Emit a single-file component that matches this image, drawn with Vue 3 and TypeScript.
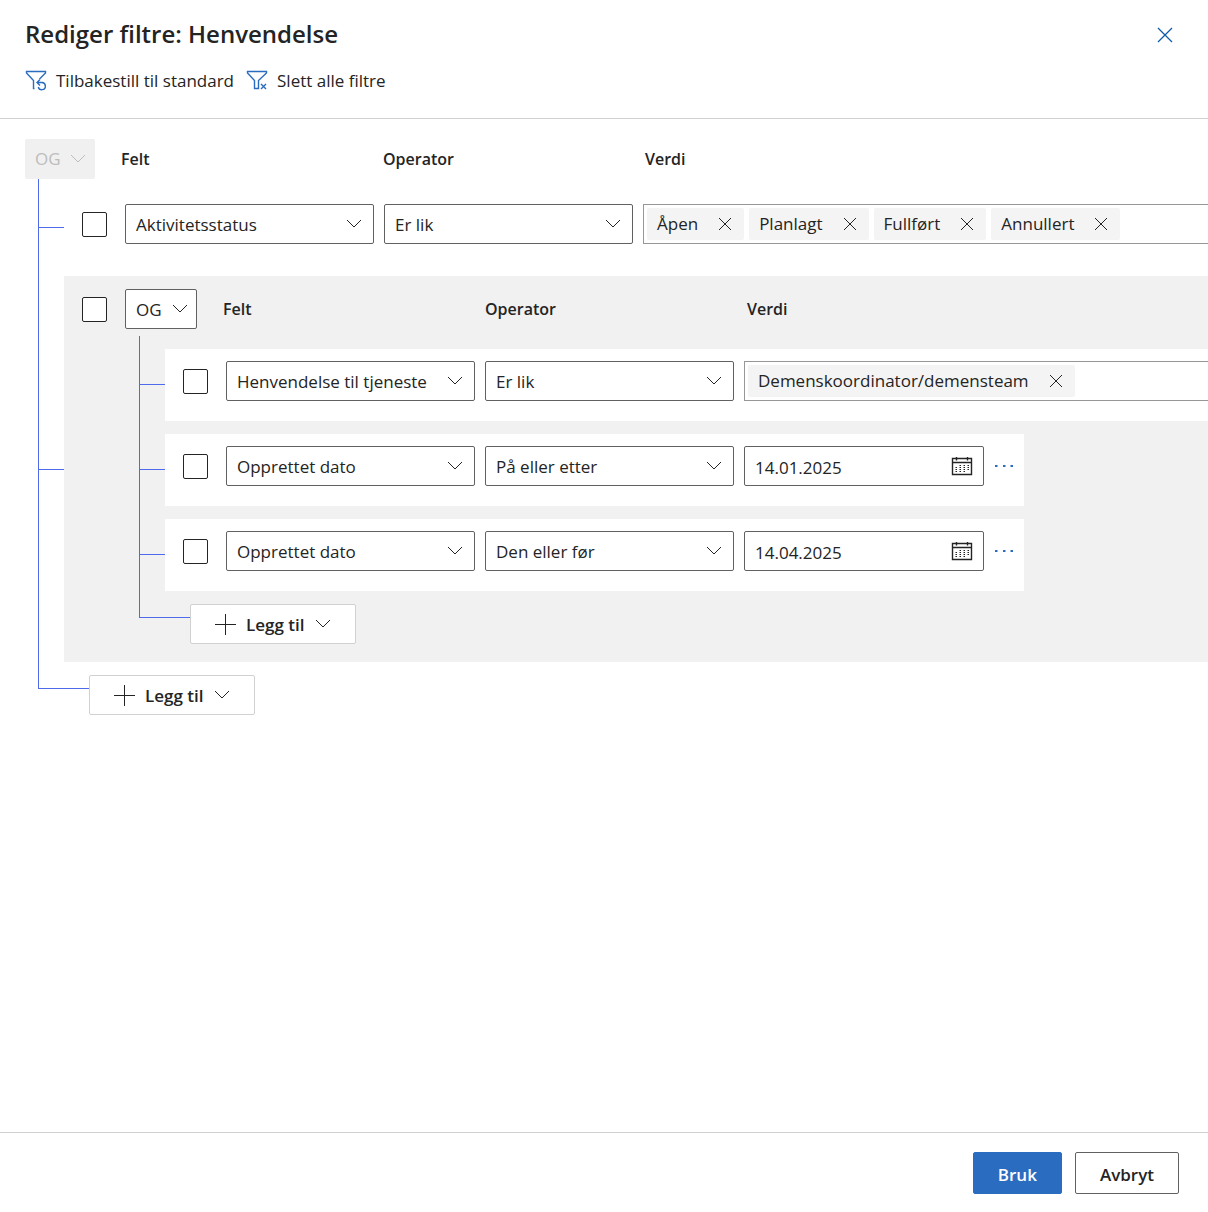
<script setup lang="ts">
import { ref } from 'vue'

interface Condition {
  id: string
  field: string
  operator: string
  tags?: string[]
  date?: string
}

const rootCondition = ref<Condition>({
  id: 'status',
  field: 'Aktivitetsstatus',
  operator: 'Er lik',
  tags: ['Åpen', 'Planlagt', 'Fullført', 'Annullert'],
})

const groupConditions = ref<Condition[]>([
  { id: 'service', field: 'Henvendelse til tjeneste', operator: 'Er lik', tags: ['Demenskoordinator/demensteam'] },
  { id: 'from', field: 'Opprettet dato', operator: 'På eller etter', date: '14.01.2025' },
  { id: 'to', field: 'Opprettet dato', operator: 'Den eller før', date: '14.04.2025' },
])

function removeTag(condition: Condition, tag: string) {
  condition.tags = condition.tags?.filter((t) => t !== tag)
}
</script>

<template>
  <div class="panel">
    <header class="header">
      <div class="title-row">
        <h1>Rediger filtre: Henvendelse</h1>
        <button class="close" type="button" aria-label="Lukk">
          <svg width="16" height="16" viewBox="0 0 16 16"><path d="M1 1l14 14M15 1L1 15" /></svg>
        </button>
      </div>
      <div class="toolbar">
        <button type="button">
          <svg width="22" height="22" viewBox="0 0 22 22">
            <path d="M9.500 18.500H8.500V10.500L1.500 3V1.500H20.500V3L14.500 9" />
            <path d="M12.500 12.500H17a3.600 3.600 0 1 1-3.700 4.500M15 9.500l-3 3 3 3" />
          </svg>
          Tilbakestill til standard
        </button>
        <button type="button">
          <svg width="22" height="22" viewBox="0 0 22 22">
            <path d="M20.500 1.500H1.500V3L8.500 10.500V18.500H12.500V10.500L20.500 3z" />
            <path d="M15 14l5 5M20 14l-5 5" />
          </svg>
          Slett alle filtre
        </button>
      </div>
    </header>

    <main class="body">
      <div class="group-head">
        <label class="picker logic locked">
          <select disabled aria-label="Gruppeoperator"><option>OG</option></select>
          <svg class="chevron" width="16" height="10" viewBox="0 0 16 10"><path d="M1 1l7 7 7-7" /></svg>
        </label>
        <div class="columns"><span>Felt</span><span>Operator</span><span>Verdi</span></div>
      </div>

      <div class="branch">
        <div class="item">
          <div class="rail"></div>
          <div class="condition top wide">
            <input class="check" type="checkbox" aria-label="Velg rad" />
            <label class="picker field">
              <select aria-label="Felt"><option>{{ rootCondition.field }}</option></select>
              <svg class="chevron" width="16" height="10" viewBox="0 0 16 10"><path d="M1 1l7 7 7-7" /></svg>
            </label>
            <label class="picker field">
              <select aria-label="Operator"><option>{{ rootCondition.operator }}</option></select>
              <svg class="chevron" width="16" height="10" viewBox="0 0 16 10"><path d="M1 1l7 7 7-7" /></svg>
            </label>
            <div class="tags">
              <span v-for="tag in rootCondition.tags" :key="tag" class="tag">
                {{ tag }}
                <button type="button" :aria-label="'Fjern ' + tag" @click="removeTag(rootCondition, tag)">
                  <svg width="14" height="14" viewBox="0 0 14 14"><path d="M1 1l12 12M13 1L1 13" /></svg>
                </button>
              </span>
              <input type="text" aria-label="Verdi" />
            </div>
          </div>
        </div>

        <div class="item">
          <div class="rail"></div>
          <section class="group">
            <div class="group-head nested">
              <input class="check" type="checkbox" aria-label="Velg gruppe" />
              <label class="picker logic">
                <select aria-label="Gruppeoperator"><option>OG</option><option>ELLER</option></select>
                <svg class="chevron" width="16" height="10" viewBox="0 0 16 10"><path d="M1 1l7 7 7-7" /></svg>
              </label>
              <div class="columns"><span>Felt</span><span>Operator</span><span>Verdi</span></div>
            </div>

            <div class="branch">
              <div v-for="row in groupConditions" :key="row.id" class="item">
                <div class="rail"></div>
                <div class="condition" :class="{ wide: row.tags }">
                  <input class="check" type="checkbox" aria-label="Velg rad" />
                  <label class="picker field">
                    <select aria-label="Felt"><option>{{ row.field }}</option></select>
                    <svg class="chevron" width="16" height="10" viewBox="0 0 16 10"><path d="M1 1l7 7 7-7" /></svg>
                  </label>
                  <label class="picker field">
                    <select aria-label="Operator"><option>{{ row.operator }}</option></select>
                    <svg class="chevron" width="16" height="10" viewBox="0 0 16 10"><path d="M1 1l7 7 7-7" /></svg>
                  </label>
                  <div v-if="row.tags" class="tags">
                    <span v-for="tag in row.tags" :key="tag" class="tag">
                      {{ tag }}
                      <button type="button" :aria-label="'Fjern ' + tag" @click="removeTag(row, tag)">
                        <svg width="14" height="14" viewBox="0 0 14 14"><path d="M1 1l12 12M13 1L1 13" /></svg>
                      </button>
                    </span>
                    <input type="text" aria-label="Verdi" />
                  </div>
                  <template v-else>
                    <label class="picker date">
                      <input v-model="row.date" type="text" aria-label="Dato" />
                      <svg class="calendar" width="22" height="20" viewBox="0 0 22 20">
                        <path d="M1.500 2.500H20.500V18.500H1.500zM1.500 6.500H20.500M5.500 1V4.500M16.500 1V4.500" />
                        <path
                          class="days"
                          d="M8.500 9.500H18M4.500 11.500H18M4.500 13.500H18M4.500 15.500H14"
                        />
                      </svg>
                    </label>
                    <button class="more" type="button" aria-label="Flere kommandoer">
                      <svg width="20" height="4" viewBox="0 0 20 4">
                        <path d="M1 1h2.500v2H1zM9 1h2.500v2H9zM16.500 1h2.500v2h-2.500z" />
                      </svg>
                    </button>
                  </template>
                </div>
              </div>
            </div>
            <div class="add-row">
              <div class="elbow"></div>
              <button class="add" type="button">
                <svg width="21" height="21" viewBox="0 0 21 21"><path d="M10.500 0v21M0 10.500h21" /></svg>
                <span>Legg til</span>
                <svg width="16" height="10" viewBox="0 0 16 10"><path d="M1 1l7 7 7-7" /></svg>
              </button>
            </div>
          </section>
        </div>
      </div>
      <div class="add-row">
        <div class="elbow"></div>
        <button class="add" type="button">
          <svg width="21" height="21" viewBox="0 0 21 21"><path d="M10.500 0v21M0 10.500h21" /></svg>
          <span>Legg til</span>
          <svg width="16" height="10" viewBox="0 0 16 10"><path d="M1 1l7 7 7-7" /></svg>
        </button>
      </div>
    </main>

    <footer class="footer">
      <button class="primary" type="button">Bruk</button>
      <button class="secondary" type="button">Avbryt</button>
    </footer>
  </div>
</template>

<style>
body {
  margin: 0;
  background: #fff;
}
</style>

<style scoped>
.panel {
  display: flex;
  flex-direction: column;
  min-height: 100vh;
  color: #242424;
  font: 400 17px/24px 'Segoe UI', 'Open Sans', 'Noto Sans', sans-serif;
}
.panel * {
  box-sizing: border-box;
}
button,
input,
select {
  margin: 0;
  padding: 0;
  border: 0;
  background: none;
  color: inherit;
  font: inherit;
}
svg {
  display: block;
  flex: none;
  fill: none;
  stroke: currentColor;
  stroke-width: 1;
}

.header {
  padding: 17px 25px;
  border-bottom: 1px solid #d1d1d1;
}
.title-row {
  display: flex;
  align-items: center;
  justify-content: space-between;
}
h1 {
  margin: 0;
  font-size: 24px;
  line-height: 34px;
  font-weight: 600;
}
.close {
  display: grid;
  place-items: center;
  width: 36px;
  height: 34px;
  padding-top: 2px;
  color: #0f5ba8;
}
.close svg {
  stroke-width: 1.3;
}
.toolbar {
  display: flex;
  gap: 12px;
  margin-top: 10px;
}
.toolbar button {
  display: flex;
  align-items: center;
  gap: 9px;
  height: 40px;
}
.toolbar svg {
  color: #2a6cbf;
  stroke-width: 1.4;
}

.body {
  flex: 1;
  padding: 20px 0 20px 25px;
  overflow: hidden;
}
.group-head {
  display: flex;
  align-items: center;
  height: 40px;
}
.group-head.nested {
  margin-bottom: 7px;
  padding-left: 18px;
}
.nested .check {
  margin-right: 18px;
}
.columns {
  display: flex;
  margin-left: 26px;
  font-size: 16px;
  font-weight: 600;
}
.columns span {
  width: 262px;
}

.picker {
  display: grid;
  align-items: center;
  height: 40px;
  border: 1px solid #616161;
  border-radius: 2px;
  background: #fff;
}
.picker > * {
  grid-area: 1 / 1;
}
.picker select,
.picker input {
  appearance: none;
  width: 100%;
  height: 38px;
  padding: 2px 40px 0 10px;
  outline: 0;
}
.picker svg {
  justify-self: end;
  margin-right: 11px;
  pointer-events: none;
}
.logic {
  width: 72px;
}
.logic select {
  padding-right: 0;
}
.picker.logic svg {
  margin-right: 8px;
}
.locked {
  width: 70px;
  border-color: #f0f0f0;
  background: #f0f0f0;
  color: #bdbdbd;
}
.locked select {
  padding: 0 0 0 9px;
  opacity: 1;
}
.field {
  flex: none;
  width: 249px;
}
.date {
  flex: none;
  width: 240px;
}
.picker .calendar {
  margin-right: 10px;
  stroke-width: 1.4;
}
.calendar .days {
  stroke-width: 1;
  stroke-dasharray: 1.500 2.500;
}
.check {
  flex: none;
  appearance: none;
  width: 25px;
  height: 25px;
  border: 1px solid #242424;
  border-radius: 2px;
  background: #fff;
}
.check:checked {
  background: #2a6cbf;
}

/* Tree lines joining a group to its conditions */
.branch {
  margin-left: 13px;
  padding-top: 13px;
  border-left: 1px solid #4f6bed;
}
.item {
  display: flex;
}
.rail {
  display: flex;
  flex: none;
  align-items: center;
  width: 25px;
  padding-bottom: 13px;
}
.rail::before {
  content: '';
  flex: 1;
  height: 1px;
  background: #4f6bed;
}
.group .rail {
  padding-bottom: 14px;
}
.condition,
.group {
  margin-bottom: 13px;
}
.group .branch,
.group .add-row {
  margin-left: 75px;
}
.group {
  flex: 1;
  min-width: 0;
  padding: 13px 0 18px;
  background: #f1f1f1;
}
.condition {
  display: flex;
  align-items: center;
  gap: 10px;
  padding: 12px 0 20px 18px;
  background: #fff;
}
.condition.top {
  margin-bottom: 12px;
}
.condition .check {
  margin-right: 8px;
}
.wide {
  flex: 1;
  min-width: 0;
}
.tags {
  display: flex;
  flex: 1;
  align-items: center;
  gap: 5px;
  min-width: 0;
  height: 40px;
  padding-left: 3px;
  border: 1px solid #979797;
  border-right: 0;
}
.tags input {
  flex: 1;
  min-width: 0;
  height: 32px;
  outline: 0;
}
.tag {
  display: flex;
  flex: none;
  align-items: center;
  height: 32px;
  padding-left: 10px;
  gap: 8px;
  border-radius: 2px;
  background: #f4f4f4;
}
.tag button {
  display: grid;
  place-items: center;
  width: 38px;
  height: 32px;
}
.more {
  display: grid;
  place-items: center;
  width: 40px;
  height: 40px;
  margin-left: -10px;
  color: #2a6cbf;
}
.more svg {
  fill: currentColor;
  stroke: none;
}

.add-row {
  display: flex;
  margin-left: 13px;
}
.elbow {
  width: 51px;
  height: 14px;
  border: solid #4f6bed;
  border-width: 0 0 1px 1px;
}
.add {
  display: flex;
  align-items: center;
  gap: 10px;
  height: 40px;
  padding: 0 24px;
  border: 1px solid #d1d1d1;
  border-radius: 2px;
  background: #fff;
  font-weight: 600;
}
.add span {
  padding-top: 2px;
}

.footer {
  display: flex;
  justify-content: flex-end;
  gap: 13px;
  padding: 19px 29px 18px;
  border-top: 1px solid #d1d1d1;
}
.footer button {
  height: 42px;
  padding: 3px 24px 0;
  border: 1px solid #616161;
  border-radius: 2px;
  font-weight: 600;
}
.footer .primary {
  border-color: #2a6cbf;
  background: #2a6cbf;
  color: #fff;
}
</style>
